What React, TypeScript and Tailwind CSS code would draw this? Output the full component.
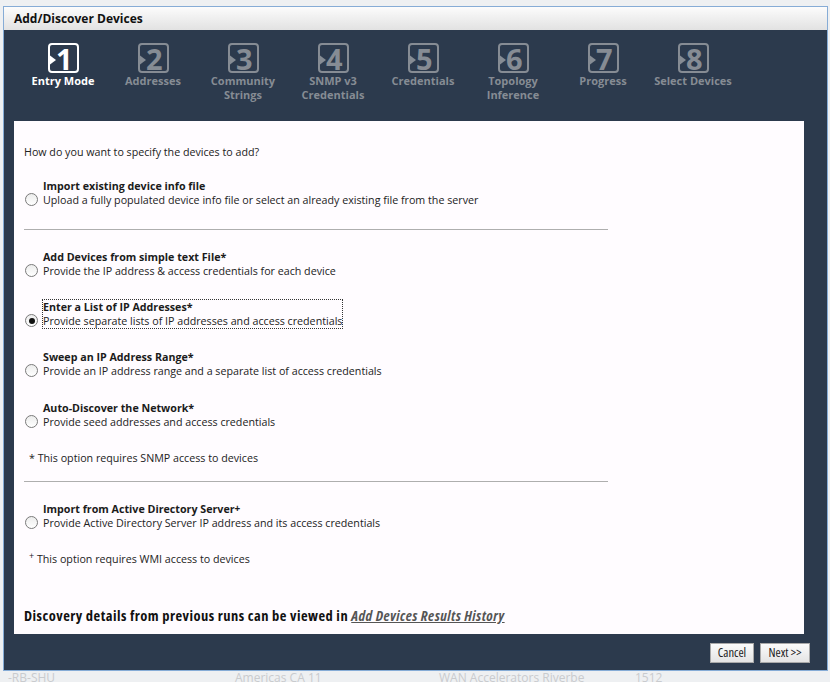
import React from 'react'

const steps = [
  { n: '1', label: ['Entry Mode'] },
  { n: '2', label: ['Addresses'] },
  { n: '3', label: ['Community', 'Strings'] },
  { n: '4', label: ['SNMP v3', 'Credentials'] },
  { n: '5', label: ['Credentials'] },
  { n: '6', label: ['Topology', 'Inference'] },
  { n: '7', label: ['Progress'] },
  { n: '8', label: ['Select Devices'] },
]

function StepIcon({ n, active }: { n: string; active: boolean }) {
  const tone = active ? 'border-white text-white' : 'border-[#868c94] text-[#868c94]'
  return (
    <div className={`relative w-[31px] h-[30px] border-2 rounded-[4px] flex items-center justify-center ${tone}`}>
      <span className="text-[29px] font-bold leading-none pl-[2px] tracking-tight">{n}</span>
      <span
        className={`absolute left-[-2px] top-[9px] w-0 h-0 border-y-[6px] border-y-transparent border-l-[8px] ${
          active ? 'border-l-white' : 'border-l-[#868c94]'
        }`}
      />
    </div>
  )
}

function Radio({ checked }: { checked?: boolean }) {
  return (
    <span className="w-[13px] h-[13px] shrink-0 rounded-full border border-[#7a7a7a] bg-gradient-to-b from-[#ececec] to-white flex items-center justify-center mb-[1px]">
      {checked && <span className="w-[6px] h-[6px] rounded-full bg-[#111]" />}
    </span>
  )
}

function Option({
  title,
  desc,
  checked,
  focused,
  sup,
  className = '',
}: {
  title: string
  desc: string
  checked?: boolean
  focused?: boolean
  sup?: string
  className?: string
}) {
  return (
    <div className={`flex items-end gap-[5px] pl-[1px] ${className}`}>
      <Radio checked={checked} />
      <div className={`leading-[14px] ${focused ? 'outline outline-1 outline-dotted outline-[#333]' : ''}`}>
        <div className="font-bold text-[#1b1b1b]">
          {title}
          {sup && <sup className="text-[10px] font-bold relative -top-[1px]">{sup}</sup>}
        </div>
        <div className="text-[#222]">{desc}</div>
      </div>
    </div>
  )
}

export default function App() {
  return (
    <div className="relative w-[830px] h-[682px] overflow-hidden bg-[#eef0f2] font-['Open_Sans',sans-serif] text-[10.7px]">
      <div className="ml-[3px] mt-[6px] w-[825px] border border-[#86acd6] flex flex-col">
        <div className="h-[23px] bg-gradient-to-b from-[#fcfcfc] to-[#e2e2e2] flex items-center pl-[10px] text-[12px] font-bold text-[#111]">
          Add/Discover Devices
        </div>
        <div className="h-[640px] bg-[#2c3a4d] flex flex-col">
          <div className="h-[91px] flex pl-[14px] pt-[13px]">
            {steps.map((s, i) => (
              <div key={s.n} className="w-[90px] flex flex-col items-center">
                <StepIcon n={s.n} active={i === 0} />
                <div
                  className={`mt-[1px] text-center text-[11px] font-bold leading-[14px] ${
                    i === 0 ? 'text-white' : 'text-[#868c94]'
                  }`}
                >
                  {s.label.map((l) => (
                    <div key={l}>{l}</div>
                  ))}
                </div>
              </div>
            ))}
          </div>

          <div className="ml-[10px] w-[790px] h-[513px] bg-[#fffcff] pl-[10px] pt-[24px] flex flex-col text-[#222]">
            <div className="leading-[14px]">How do you want to specify the devices to add?</div>
            <Option
              className="mt-[20px]"
              title="Import existing device info file"
              desc="Upload a fully populated device info file or select an already existing file from the server"
            />
            <div className="mt-[22px] h-px w-[584px] bg-[#aeaeae]" />
            <Option
              className="mt-[20px]"
              title="Add Devices from simple text File*"
              desc="Provide the IP address & access credentials for each device"
            />
            <Option
              className="mt-[22px]"
              title="Enter a List of IP Addresses*"
              desc="Provide separate lists of IP addresses and access credentials"
              checked
              focused
            />
            <Option
              className="mt-[22px]"
              title="Sweep an IP Address Range*"
              desc="Provide an IP address range and a separate list of access credentials"
            />
            <Option
              className="mt-[23px]"
              title="Auto-Discover the Network*"
              desc="Provide seed addresses and access credentials"
            />
            <div className="mt-[22px] pl-[5px] leading-[14px]">* This option requires SNMP access to devices</div>
            <div className="mt-[16px] h-px w-[584px] bg-[#aeaeae]" />
            <Option
              className="mt-[20px]"
              title="Import from Active Directory Server"
              sup="+"
              desc="Provide Active Directory Server IP address and its access credentials"
            />
            <div className="mt-[22px] pl-[5px] leading-[14px]">
              <sup className="text-[9px]">+</sup> This option requires WMI access to devices
            </div>
            <div className="mt-[41px] leading-[18px] text-[14.5px] tracking-[0.48px] font-bold text-[#111] [font-stretch:75%]">
              Discovery details from previous runs can be viewed in{' '}
              <a className="italic underline text-[#555]">Add Devices Results History</a>
            </div>
          </div>

          <div className="flex justify-end gap-[6px] pr-[17px] mt-[9px]">
            <button className="h-[20px] w-[44px] border border-[#a9a9a9] bg-gradient-to-b from-[#fbfbfb] to-[#e4e4e4] text-[12.5px] text-[#222] [font-stretch:75%]">
              Cancel
            </button>
            <button className="h-[20px] w-[50px] border border-[#a9a9a9] bg-gradient-to-b from-[#fbfbfb] to-[#e4e4e4] text-[12.5px] text-[#222] [font-stretch:75%]">
              Next &gt;&gt;
            </button>
          </div>
        </div>
      </div>
      <div className="flex text-[12px] text-[#c9cbce] leading-[12px] pt-[1px]">
        <span className="ml-[8px] w-[227px]">-RB-SHU</span>
        <span className="w-[204px]">Americas CA 11</span>
        <span className="w-[196px]">WAN Accelerators Riverbe</span>
        <span>1512</span>
      </div>
    </div>
  )
}
